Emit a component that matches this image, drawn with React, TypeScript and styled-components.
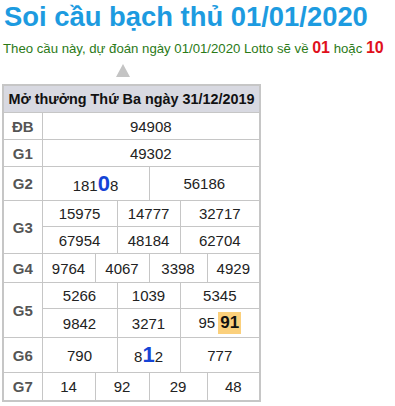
import React from 'react';
import styled, { createGlobalStyle } from 'styled-components';

const GlobalStyle = createGlobalStyle`
  body {
    margin: 0;
    background: #fff;
    font-family: "Liberation Sans", Arial, sans-serif;
  }
`;

type Part = { t: string; kind?: 'big' | 'hot' };
type Cell = { span: number; parts: Part[] };
type SubRow = { h: number; cells: Cell[] };
type Prize = { label: string; rows: SubRow[] };

const n = (t: string): Part[] => [{ t }];

const prizes: Prize[] = [
  { label: 'ĐB', rows: [{ h: 27, cells: [{ span: 6, parts: n('94908') }] }] },
  { label: 'G1', rows: [{ h: 27, cells: [{ span: 6, parts: n('49302') }] }] },
  {
    label: 'G2',
    rows: [
      {
        h: 34,
        cells: [
          { span: 3, parts: [{ t: '181' }, { t: '0', kind: 'big' }, { t: '8' }] },
          { span: 3, parts: n('56186') },
        ],
      },
    ],
  },
  {
    label: 'G3',
    rows: [
      { h: 26, cells: [{ span: 2, parts: n('15975') }, { span: 2, parts: n('14777') }, { span: 2, parts: n('32717') }] },
      { h: 27, cells: [{ span: 2, parts: n('67954') }, { span: 2, parts: n('48184') }, { span: 2, parts: n('62704') }] },
    ],
  },
  {
    label: 'G4',
    rows: [
      {
        h: 29,
        cells: [
          { span: 1, parts: n('9764') },
          { span: 2, parts: n('4067') },
          { span: 2, parts: n('3398') },
          { span: 1, parts: n('4929') },
        ],
      },
    ],
  },
  {
    label: 'G5',
    rows: [
      { h: 26, cells: [{ span: 2, parts: n('5266') }, { span: 2, parts: n('1039') }, { span: 2, parts: n('5345') }] },
      {
        h: 29,
        cells: [
          { span: 2, parts: n('9842') },
          { span: 2, parts: n('3271') },
          { span: 2, parts: [{ t: '95' }, { t: '91', kind: 'hot' }] },
        ],
      },
    ],
  },
  {
    label: 'G6',
    rows: [
      {
        h: 35,
        cells: [
          { span: 2, parts: n('790') },
          { span: 2, parts: [{ t: '8' }, { t: '1', kind: 'big' }, { t: '2' }] },
          { span: 2, parts: n('777') },
        ],
      },
    ],
  },
  {
    label: 'G7',
    rows: [
      {
        h: 28,
        cells: [
          { span: 1, parts: n('14') },
          { span: 2, parts: n('92') },
          { span: 2, parts: n('29') },
          { span: 1, parts: n('48') },
        ],
      },
    ],
  },
];

const colWidths = [39, 53, 22, 32, 31, 27, 53];

export default function App() {
  return (
    <Page>
      <GlobalStyle />
      <Title>Soi cầu bạch thủ 01/01/2020</Title>
      <Lead>
        Theo cầu này, dự đoán ngày 01/01/2020 Lotto sẽ về <Pick>01</Pick> hoặc <Pick>10</Pick>
      </Lead>
      <Arrow />
      <Result>
        <colgroup>
          {colWidths.map((w, i) => (
            <col key={i} style={{ width: w }} />
          ))}
        </colgroup>
        <thead>
          <tr>
            <Head colSpan={7}>Mở thưởng Thứ Ba ngày 31/12/2019</Head>
          </tr>
        </thead>
        <tbody>
          {prizes.map((p) =>
            p.rows.map((r, ri) => (
              <Row key={p.label + ri} $h={r.h}>
                {ri === 0 && <Label rowSpan={p.rows.length}>{p.label}</Label>}
                {r.cells.map((c, ci) => (
                  <Num key={ci} colSpan={c.span}>
                    {c.parts.map((pt, k) =>
                      pt.kind === 'big' ? (
                        <Big key={k}>{pt.t}</Big>
                      ) : pt.kind === 'hot' ? (
                        <Hot key={k}>{pt.t}</Hot>
                      ) : (
                        <span key={k}>{pt.t}</span>
                      )
                    )}
                  </Num>
                ))}
              </Row>
            ))
          )}
        </tbody>
      </Result>
    </Page>
  );
}

const Page = styled.div`
  padding: 0 2px;
`;

const Title = styled.h1`
  margin: 0;
  padding: 2px 0 0 2px;
  font-size: 27.4px;
  line-height: 30px;
  font-weight: bold;
  color: #1d9be0;
`;

const Lead = styled.p`
  margin: 6px 0 0 1px;
  font-size: 13.2px;
  line-height: 20px;
  color: #2b7a17;
`;

const Pick = styled.b`
  font-size: 16px;
  color: #e0101c;
`;

const Arrow = styled.div`
  width: 0;
  height: 0;
  margin: 5px 0 0 114px;
  border-left: 7px solid transparent;
  border-right: 7px solid transparent;
  border-bottom: 13px solid #c4c4c4;
`;

const Result = styled.table`
  margin-top: 7px;
  width: 257px;
  table-layout: fixed;
  border-collapse: collapse;
  border: 2px solid #c6c6c6;
  font-size: 15px;
  color: #222;
`;

const Head = styled.th`
  height: 26px;
  padding: 0;
  background: #d8d9e1;
  border: 1px solid #c6c6c6;
  font-size: 14.4px;
  font-weight: bold;
  color: #111;
  text-align: center;
  white-space: nowrap;
`;

const Row = styled.tr<{ $h: number }>`
  height: ${(p) => p.$h}px;
`;

const Label = styled.td`
  padding: 0;
  border: 1px solid #c6c6c6;
  text-align: center;
  font-weight: bold;
  color: #555;
`;

const Num = styled.td`
  padding: 0;
  border: 1px solid #c6c6c6;
  text-align: center;
  white-space: nowrap;
`;

const Big = styled.span`
  font-size: 22px;
  font-weight: bold;
  color: #1444d6;
`;

const Hot = styled.span`
  display: inline-block;
  margin-left: 3px;
  padding: 1px 2px;
  background: #fbd07c;
  font-size: 17px;
  font-weight: bold;
  color: #111;
`;
